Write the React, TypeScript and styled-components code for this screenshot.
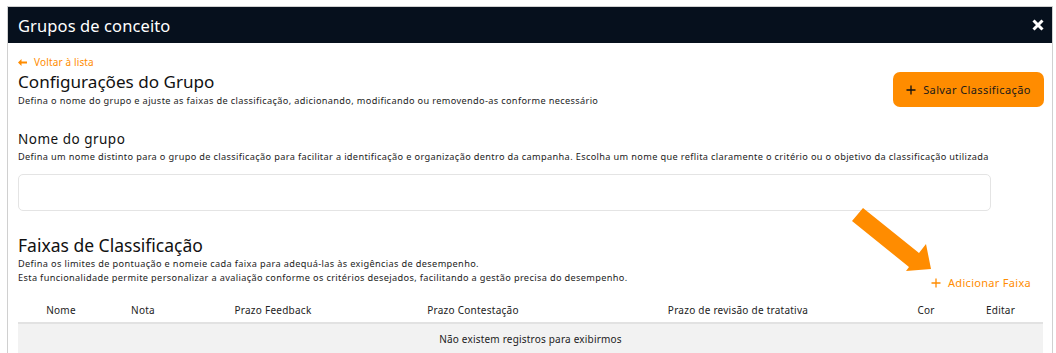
import React from "react";
import styled, { createGlobalStyle } from "styled-components";

const Global = createGlobalStyle`
  html, body { margin: 0; padding: 0; background: #ffffff; }
  body { font-family: "Noto Sans", "Open Sans", Arial, sans-serif; color: #111; overflow: hidden; }
  * { box-sizing: border-box; }
`;

const Page = styled.div`
  position: relative;
  width: 1056px;
  height: 353px;
  padding: 6px 3px 0 7px;
  overflow: hidden;
`;

const Modal = styled.div`
  border: 1px solid #d0d0d0;
  border-bottom: none;
  height: 100%;
  background: #fff;
`;

const Header = styled.div`
  height: 36px;
  background: #06101d;
  display: flex;
  align-items: center;
  justify-content: space-between;
  padding: 0 8px 0 10px;
`;

const HeaderTitle = styled.h1`
  margin: 0;
  font-size: 16.5px;
  font-weight: 400;
  color: #fff;
  letter-spacing: 0.1px;
`;

const CloseBtn = styled.button`
  border: none;
  background: none;
  padding: 0;
  display: flex;
  cursor: pointer;
`;

const Body = styled.div`
  padding: 12px 8px 0 10px;
`;

const TopRow = styled.div`
  display: flex;
  justify-content: space-between;
  align-items: flex-start;
`;

const Col = styled.div`
  display: flex;
  flex-direction: column;
`;

const BackLink = styled.a`
  display: flex;
  align-items: center;
  gap: 7px;
  color: #ff8c00;
  font-size: 10px;
  line-height: 14px;
  letter-spacing: 0.15px;
  text-decoration: none;
  cursor: pointer;
`;

const Title = styled.h2<{ $size?: number }>`
  margin: 1px 0 0;
  font-size: ${(p) => p.$size ?? 17.5}px;
  line-height: 24px;
  font-weight: 400;
  color: #111;
`;

const Hint = styled.p<{ $top?: number }>`
  margin: ${(p) => p.$top ?? 0}px 0 0;
  font-size: 9.2px;
  line-height: 14px;
  letter-spacing: 0.35px;
  color: #1c1c1c;
  white-space: nowrap;
`;

const PrimaryButton = styled.button`
  margin-top: 17px;
  width: 151px;
  height: 35px;
  border: none;
  border-radius: 7px;
  background: #ff8c00;
  color: #1a1a1a;
  font-family: inherit;
  font-size: 11px;
  letter-spacing: 0.4px;
  display: flex;
  align-items: center;
  justify-content: center;
  gap: 7px;
  cursor: pointer;
`;

const Section = styled.div`
  margin-top: 22px;
`;

const Label = styled.h3`
  margin: 0;
  font-size: 13.5px;
  line-height: 18px;
  letter-spacing: 0.5px;
  font-weight: 400;
  color: #111;
`;

const Input = styled.input`
  display: block;
  margin-top: 10px;
  width: 973px;
  height: 37px;
  border: 1px solid #e4e4e4;
  border-radius: 5px;
  outline: none;
`;

const BandsSection = styled.div`
  margin-top: 21px;
`;

const BandsHead = styled.div`
  display: flex;
  justify-content: space-between;
  align-items: flex-end;
`;

const AddLink = styled.a`
  display: flex;
  align-items: center;
  gap: 7px;
  margin-right: 13px;
  margin-bottom: -5px;
  color: #ff8c00;
  font-size: 11px;
  letter-spacing: 0.3px;
  cursor: pointer;
`;

const Table = styled.div`
  margin-top: 12px;
  width: 1025px;
`;

const Row = styled.div`
  display: grid;
  grid-template-columns: 86px 78px 182px 218px 312px 64px 85px;
  height: 27px;
  align-items: center;
  border-bottom: 2px solid #e2e2e2;
`;

const HeadCell = styled.div`
  text-align: center;
  font-size: 10px;
  letter-spacing: 0.25px;
  color: #222;
  white-space: nowrap;
`;

const EmptyRow = styled.div`
  height: 30px;
  background: #f2f2f2;
  display: flex;
  align-items: center;
  justify-content: center;
  font-size: 10px;
  letter-spacing: 0.2px;
  color: #1c1c1c;
`;

const Annotation = styled.svg`
  position: absolute;
  left: 0;
  top: 0;
  pointer-events: none;
`;

const Plus = ({ color, size = 10 }: { color: string; size?: number }) => (
  <svg width={size} height={size} viewBox="0 0 10 10">
    <path d="M5 0.5v9M0.5 5h9" stroke={color} strokeWidth="1.3" />
  </svg>
);

const columns = [
  "Nome",
  "Nota",
  "Prazo Feedback",
  "Prazo Contestação",
  "Prazo de revisão de tratativa",
  "Cor",
  "Editar",
];

export default function App() {
  return (
    <>
      <Global />
      <Page>
        <Modal>
          <Header>
            <HeaderTitle>Grupos de conceito</HeaderTitle>
            <CloseBtn aria-label="Fechar">
              <svg width="12" height="12" viewBox="0 0 12 12">
                <path d="M1.5 1.5l9 9M10.5 1.5l-9 9" stroke="#fff" strokeWidth="3" />
              </svg>
            </CloseBtn>
          </Header>
          <Body>
            <TopRow>
              <Col>
                <BackLink>
                  <svg width="9" height="7" viewBox="0 0 9 7">
                    <path d="M0 3.5L3.5 0v2.4H9v2.2H3.5V7z" fill="#ff8c00" />
                  </svg>
                  Voltar à lista
                </BackLink>
                <Title $size={17.1}>Configurações do Grupo</Title>
                <Hint>
                  Defina o nome do grupo e ajuste as faixas de classificação, adicionando,
                  modificando ou removendo-as conforme necessário
                </Hint>
              </Col>
              <PrimaryButton>
                <Plus color="#111" />
                Salvar Classificação
              </PrimaryButton>
            </TopRow>

            <Section>
              <Label>Nome do grupo</Label>
              <Hint $top={2}>
                Defina um nome distinto para o grupo de classificação para facilitar a
                identificação e organização dentro da campanha. Escolha um nome que reflita
                claramente o critério ou o objetivo da classificação utilizada
              </Hint>
              <Input />
            </Section>

            <BandsSection>
              <BandsHead>
                <Col>
                  <Title>Faixas de Classificação</Title>
                  <Hint>
                    Defina os limites de pontuação e nomeie cada faixa para adequá-las às
                    exigências de desempenho.
                  </Hint>
                  <Hint>
                    Esta funcionalidade permite personalizar a avaliação conforme os critérios
                    desejados, facilitando a gestão precisa do desempenho.
                  </Hint>
                </Col>
                <AddLink>
                  <Plus color="#ff8c00" />
                  Adicionar Faixa
                </AddLink>
              </BandsHead>
              <Table>
                <Row>
                  {columns.map((c) => (
                    <HeadCell key={c}>{c}</HeadCell>
                  ))}
                </Row>
                <EmptyRow>Não existem registros para exibirmos</EmptyRow>
              </Table>
            </BandsSection>
          </Body>
        </Modal>
        <Annotation width="1056" height="353" viewBox="0 0 1056 353">
          <polygon
            points="863,208 919,253 926,244 931,269 906,271 909,267 852,221"
            fill="#ff8c00"
          />
        </Annotation>
      </Page>
    </>
  );
}
